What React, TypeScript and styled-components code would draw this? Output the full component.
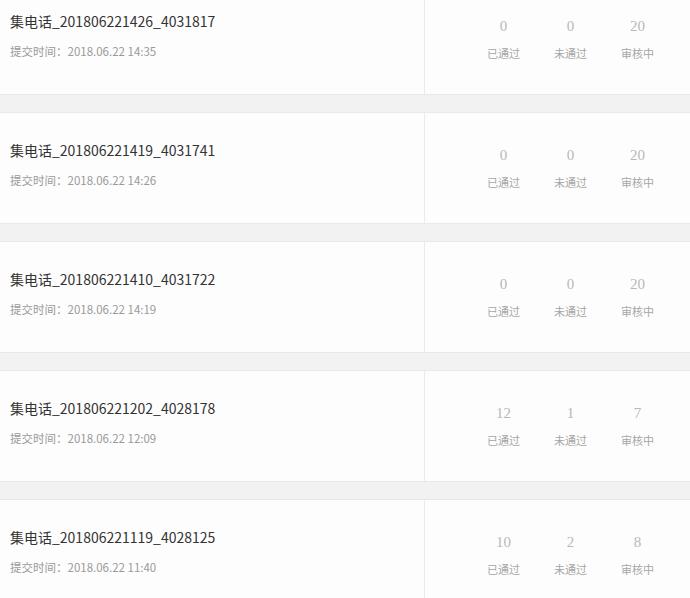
import styled, { createGlobalStyle } from "styled-components";

const GlobalStyle = createGlobalStyle`
  html, body {
    margin: 0;
    padding: 0;
    background: #f2f2f2;
    overflow: hidden;
  }
  body {
    font-family: "Microsoft YaHei", "Noto Sans CJK SC", sans-serif;
  }
`;

const List = styled.div`
  display: flex;
  flex-direction: column;
  gap: 17px;
  margin-top: -17px;
  width: 690px;
`;

const Card = styled.div`
  display: flex;
  height: 110px;
  background: #fdfdfd;
  border-top: 1px solid #e9e9e9;
  border-bottom: 1px solid #e9e9e9;
`;

const Info = styled.div`
  width: 414px;
  padding-left: 10px;
  border-right: 1px solid #ebebeb;
  display: flex;
  flex-direction: column;
`;

const Title = styled.div`
  margin-top: 27px;
  font-size: 14px;
  line-height: 20px;
  color: #333;
`;

const SubTitle = styled.div`
  margin-top: 12px;
  font-size: 11.5px;
  line-height: 16px;
  color: #9a9a9a;
`;

const Stats = styled.div`
  flex: 1;
  display: flex;
  justify-content: flex-end;
  padding-right: 19px;
`;

const Stat = styled.div`
  width: 67px;
  display: flex;
  flex-direction: column;
  align-items: center;
`;

const Num = styled.div`
  margin-top: 32px;
  font-family: "Liberation Serif", "DejaVu Serif", serif;
  font-size: 15px;
  line-height: 20px;
  color: #b8b8b8;
`;

const Label = styled.div`
  margin-top: 9px;
  font-size: 11px;
  line-height: 16px;
  color: #a6a6a6;
`;

type Item = {
  name: string;
  time: string;
  passed: number;
  failed: number;
  pending: number;
};

const items: Item[] = [
  { name: "集电话_201806221426_4031817", time: "2018.06.22 14:35", passed: 0, failed: 0, pending: 20 },
  { name: "集电话_201806221419_4031741", time: "2018.06.22 14:26", passed: 0, failed: 0, pending: 20 },
  { name: "集电话_201806221410_4031722", time: "2018.06.22 14:19", passed: 0, failed: 0, pending: 20 },
  { name: "集电话_201806221202_4028178", time: "2018.06.22 12:09", passed: 12, failed: 1, pending: 7 },
  { name: "集电话_201806221119_4028125", time: "2018.06.22 11:40", passed: 10, failed: 2, pending: 8 },
];

export default function App() {
  return (
    <>
      <GlobalStyle />
      <List>
        {items.map((it) => (
          <Card key={it.name}>
            <Info>
              <Title>{it.name}</Title>
              <SubTitle>提交时间：{it.time}</SubTitle>
            </Info>
            <Stats>
              <Stat>
                <Num>{it.passed}</Num>
                <Label>已通过</Label>
              </Stat>
              <Stat>
                <Num>{it.failed}</Num>
                <Label>未通过</Label>
              </Stat>
              <Stat>
                <Num>{it.pending}</Num>
                <Label>审核中</Label>
              </Stat>
            </Stats>
          </Card>
        ))}
      </List>
    </>
  );
}
